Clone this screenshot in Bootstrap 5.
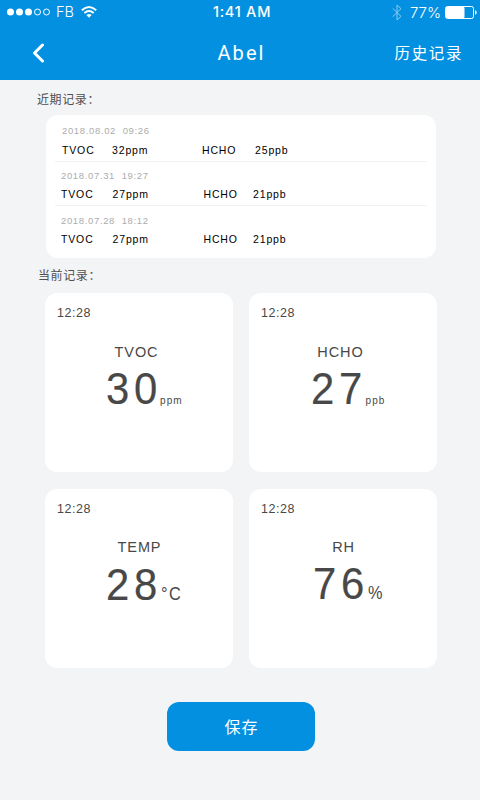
<!DOCTYPE html>
<html lang="zh-CN">
<head>
<meta charset="utf-8">
<meta name="viewport" content="width=device-width, initial-scale=1">
<title>Abel</title>
<link href="https://cdn.jsdelivr.net/npm/bootstrap@5.3.0/dist/css/bootstrap.min.css" rel="stylesheet">
<style>
  body { background: #f3f4f6; font-family: "Liberation Sans", "Noto Sans CJK SC", sans-serif; color: #484848; line-height: 1; }
  .screen { width: 480px; height: 800px; white-space: nowrap; }
  .top { background: #0390e1; height: 80px; }
  .status { height: 24px; font-family: Inter, sans-serif; padding: 0 3px 0 7px; }
  .status > * { flex: 1 1 0; }
  .carrier { font-size: 14.5px; font-weight: 300; }
  .carrier-name { margin: 0 7px 0 5px; }
  .clock { font-size: 14.5px; font-weight: 450; letter-spacing: .75px; padding-right: 0; }
  .charge { font-size: 15px; font-weight: 300; }
  .titlebar { height: 56px; padding: 2px 17px 0 32px; }
  .titlebar > * { flex: 1 1 0; }
  .title { font-size: 20px; letter-spacing: 2.1px; font-family: Roboto, sans-serif; padding-right: 12px; }
  .history { font-size: 15.5px; letter-spacing: 1.6px; padding-top: 2px; }
  .section-name { font-size: 12px; letter-spacing: .6px; font-family: "Noto Sans CJK SC", sans-serif; color: #505050; }
  .recent-name { margin: 12px 0 0 37px; height: 23px; }
  .current-name { margin: 10px 0 0 38px; height: 25px; }
  .panel { border: 0; border-radius: 12px; }
  .records { width: 390px; height: 143px; padding: 0 9px; margin-left: 46px; }
  .record { height: 44px; padding: 9px 6px 0; font-size: 10.5px; letter-spacing: .85px; color: #000; border-top: 1px solid #f1f1f2; }
  .record:first-child { height: 46px; padding: 11px 6px 0 7px; border-top: 0; }
  .record:last-child { padding-top: 10px; }
  .record time { font-size: 9.5px; letter-spacing: .65px; color: #acacac; white-space: pre; height: 9px; }
  .values { margin-top: 9px; }
  .record:first-child .values { margin-top: 10px; }
  .gas { width: 51.5px; }
  .gas-value { width: 91px; }
  .gas-b { width: 49.5px; }
  .record:first-child .gas { width: 50px; }
  .record:first-child .gas-value { width: 90px; }
  .record:first-child .gas-b { width: 53px; }
  .tiles { display: grid; grid-template-columns: 188px 188px; gap: 17px 16px; padding-left: 45px; }
  .tile { height: 179px; padding: 13px 12px; }
  .at { font-size: 12.5px; letter-spacing: .55px; line-height: 14px; }
  .metric { font-size: 14.5px; letter-spacing: .9px; line-height: 18px; margin-top: 23px; padding-right: 5px; }
  .tile-low .metric { margin-top: 22px; padding-left: 1px; padding-right: 0; }
  .reading { line-height: 45px; margin-top: 5px; padding-left: 48.5px; }
  .tile-right .reading { padding-left: 50px; }
  .tile-low .reading { margin-top: 6px; }
  .tile-low.tile-right .reading { margin-top: 5px; padding-left: 51.5px; }
  .number { font-size: 45px; letter-spacing: 5px; width: 60px; transform: scaleX(.93); transform-origin: left; -webkit-text-stroke: .2px; }
  .unit { font-size: 10px; letter-spacing: 1.1px; margin-left: -5.5px; }
  .unit-lg { font-size: 18.5px; letter-spacing: 1.6px; transform: scaleX(.88); transform-origin: left; margin-left: -5px; }
  .save { width: 148px; height: 49px; border-radius: 12px; background: #0390e1; color: #fff; font-size: 16px; letter-spacing: 1px; margin: 34px 0 0 167px; padding: 2px 0 0 1px; }
</style>
</head>
<body>
<main class="screen d-flex flex-column overflow-hidden">
  <header class="top text-white">
    <div class="status d-flex align-items-center">
      <div class="carrier d-flex align-items-center">
        <svg width="44" height="10" viewBox="0 0 44 10"><g fill="#fff"><circle cx="3.5" cy="5" r="3.5"/><circle cx="12.5" cy="5" r="3.5"/><circle cx="21.5" cy="5" r="3.5"/></g><g fill="none" stroke="#fff"><circle cx="30.5" cy="5" r="3"/><circle cx="39.5" cy="5" r="3"/></g></svg>
        <span class="carrier-name">FB</span>
        <svg width="16" height="12" viewBox="0 0 16 12"><g fill="none" stroke="#fff" stroke-width="1.9"><path d="M.8 4.3Q8-2.3 15.2 4.3"/><path d="M3.3 7Q8 2.8 12.7 7"/></g><path d="M5.4 9Q8 6.8 10.6 9L8 11.8z" fill="#fff"/></svg>
      </div>
      <div class="clock text-center">1:41 AM</div>
      <div class="charge d-flex align-items-center justify-content-end">
        <svg width="10" height="17" viewBox="0 0 10 17"><path d="M.7 4.3 9 12.4 5 16V1l4 3.7L.7 12.7" fill="none" stroke="#8acbf1" stroke-width="1"/></svg>
        <span class="ms-2 me-1">77%</span>
        <svg width="32" height="13" viewBox="0 0 32 13"><rect x=".5" y=".5" width="28" height="12" rx="2" fill="none" stroke="#fff"/><rect x="1" y="1" width="18.5" height="11" rx="1" fill="#fff"/><path d="M30 4.3c2.3.7 2.3 3.7 0 4.4z" fill="#fff"/></svg>
      </div>
    </div>
    <nav class="titlebar d-flex align-items-center">
      <div><svg class="d-block" width="13" height="20" viewBox="0 0 13 20"><path d="M10.5 2 2.5 10l8 8" fill="none" stroke="#fff" stroke-width="3" stroke-linecap="round" stroke-linejoin="round"/></svg></div>
      <div class="title text-center">Abel</div>
      <div class="history text-end">历史记录</div>
    </nav>
  </header>

  <h2 class="section-name recent-name fw-normal">近期记录：</h2>
  <section class="card panel records flex-shrink-0">
    <div class="record"><time class="d-block">2018.08.02  09:26</time>
      <div class="values d-flex"><span class="gas">TVOC</span><span class="gas-value">32ppm</span><span class="gas-b">HCHO</span><span>25ppb</span></div></div>
    <div class="record"><time class="d-block">2018.07.31  19:27</time>
      <div class="values d-flex"><span class="gas">TVOC</span><span class="gas-value">27ppm</span><span class="gas-b">HCHO</span><span>21ppb</span></div></div>
    <div class="record"><time class="d-block">2018.07.28  18:12</time>
      <div class="values d-flex"><span class="gas">TVOC</span><span class="gas-value">27ppm</span><span class="gas-b">HCHO</span><span>21ppb</span></div></div>
  </section>

  <h2 class="section-name current-name fw-normal">当前记录：</h2>
  <section class="tiles">
    <article class="card panel tile"><div class="at">12:28</div><div class="metric text-center">TVOC</div><div class="reading d-flex align-items-baseline"><span class="number">30</span><span class="unit">ppm</span></div></article>
    <article class="card panel tile tile-right"><div class="at">12:28</div><div class="metric text-center">HCHO</div><div class="reading d-flex align-items-baseline"><span class="number">27</span><span class="unit">ppb</span></div></article>
    <article class="card panel tile tile-low"><div class="at">12:28</div><div class="metric text-center">TEMP</div><div class="reading d-flex align-items-baseline"><span class="number">28</span><span class="unit-lg">°C</span></div></article>
    <article class="card panel tile tile-low tile-right"><div class="at">12:28</div><div class="metric text-center">RH</div><div class="reading d-flex align-items-baseline"><span class="number">76</span><span class="unit-lg">%</span></div></article>
  </section>
  <button type="button" class="btn save">保存</button>
</main>
</body>
</html>
